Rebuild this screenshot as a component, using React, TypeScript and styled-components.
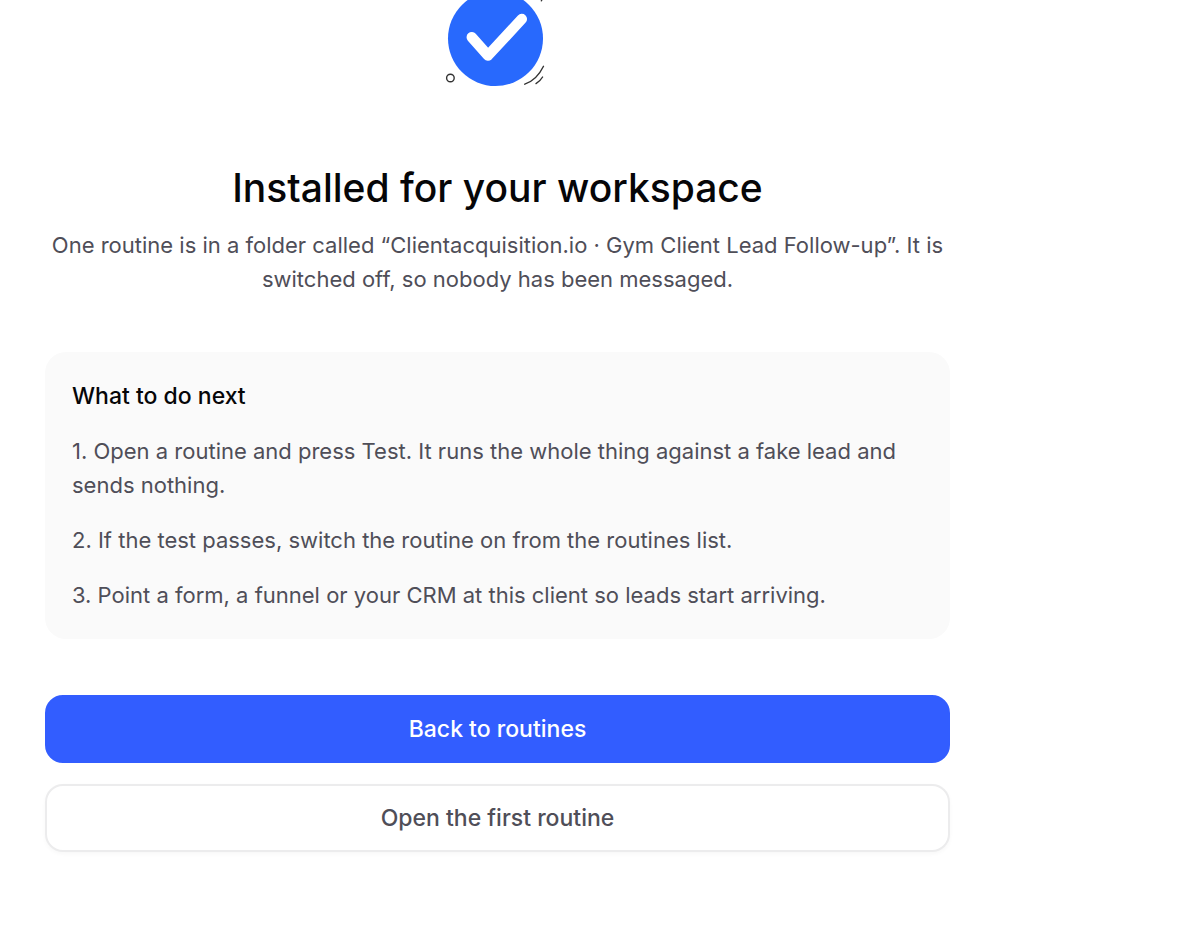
import React from "react";
import styled, { createGlobalStyle, css } from "styled-components";

const GlobalStyle = createGlobalStyle`
  * { box-sizing: border-box; }
  body {
    margin: 0;
    background: #ffffff;
    color: #4f4e58;
    font-family: Inter, "Liberation Sans", sans-serif;
    font-size: 22px;
    line-height: 34px;
    -webkit-font-smoothing: antialiased;
  }
`;

const Page = styled.main`
  display: flex;
  flex-direction: column;
  max-width: 950px;
  padding: 0 0 74px 45px;
`;

const Illustration = styled.svg`
  align-self: center;
  display: block;
  width: 120px;
  height: 98px;
  margin-bottom: 64px;
`;

const Title = styled.h1`
  margin: 0 0 14px;
  color: #060608;
  font-size: 39px;
  line-height: 52px;
  font-weight: 500;
  text-align: center;
`;

const Summary = styled.p`
  margin: 0 0 56px;
  text-align: center;
`;

const Card = styled.section`
  display: flex;
  flex-direction: column;
  gap: 21px;
  margin-bottom: 56px;
  padding: 27px;
  border-radius: 21px;
  background: #fafafa;
`;

const CardTitle = styled.h2`
  margin: 0;
  color: #060608;
  font-size: 23px;
  line-height: 34px;
  font-weight: 500;
`;

const Steps = styled.ol`
  display: flex;
  flex-direction: column;
  gap: 21px;
  margin: 0;
  padding: 0;
  list-style: none;
`;

const Step = styled.li`
  margin: 0;
`;

const Actions = styled.div`
  display: flex;
  flex-direction: column;
  gap: 21px;
`;

const Button = styled.button<{ $primary?: boolean }>`
  width: 100%;
  padding: 15px 24px;
  border: 2px solid #ececed;
  border-radius: 18px;
  background: #ffffff;
  color: #4f4e58;
  font: inherit;
  font-size: 23px;
  font-weight: 500;
  box-shadow: 0 2px 4px rgba(0, 0, 0, 0.03);
  cursor: pointer;
  ${(p) =>
    p.$primary &&
    css`
      border-color: #325dff;
      background: #325dff;
      color: #ffffff;
      box-shadow: none;
    `}
`;

const steps = [
  "Open a routine and press Test. It runs the whole thing against a fake lead and sends nothing.",
  "If the test passes, switch the routine on from the routines list.",
  "Point a form, a funnel or your CRM at this client so leads start arriving.",
];

export default function App() {
  return (
    <>
      <GlobalStyle />
      <Page>
        <Illustration viewBox="0 0 120 98" fill="none" aria-hidden="true">
          <circle cx="57.5" cy="38.5" r="47.5" fill="#2869fd" />
          <path d="M33.8 37.2 50 55.5 83.8 19" stroke="#fff" strokeWidth="10.5" strokeLinecap="round" strokeLinejoin="round" />
          <g stroke="#333" strokeWidth="1.4" strokeLinecap="round">
            <circle cx="12.4" cy="78" r="3.8" />
            <path d="M105.5 66.3C101 75.5 95 81.5 86.8 84.2" />
            <path d="M104.6 77C102.8 80 100.8 82 98 83.6" />
            <path d="M104.2-1 103.4.8" />
          </g>
        </Illustration>
        <Title>Installed for your workspace</Title>
        <Summary>
          One routine is in a folder called “Clientacquisition.io · Gym Client Lead Follow-up”. It is
          switched off, so nobody has been messaged.
        </Summary>
        <Card aria-labelledby="next-title">
          <CardTitle id="next-title">What to do next</CardTitle>
          <Steps>
            {steps.map((text, i) => (
              <Step key={text}>{`${i + 1}. ${text}`}</Step>
            ))}
          </Steps>
        </Card>
        <Actions>
          <Button type="button" $primary>Back to routines</Button>
          <Button type="button">Open the first routine</Button>
        </Actions>
      </Page>
    </>
  );
}
